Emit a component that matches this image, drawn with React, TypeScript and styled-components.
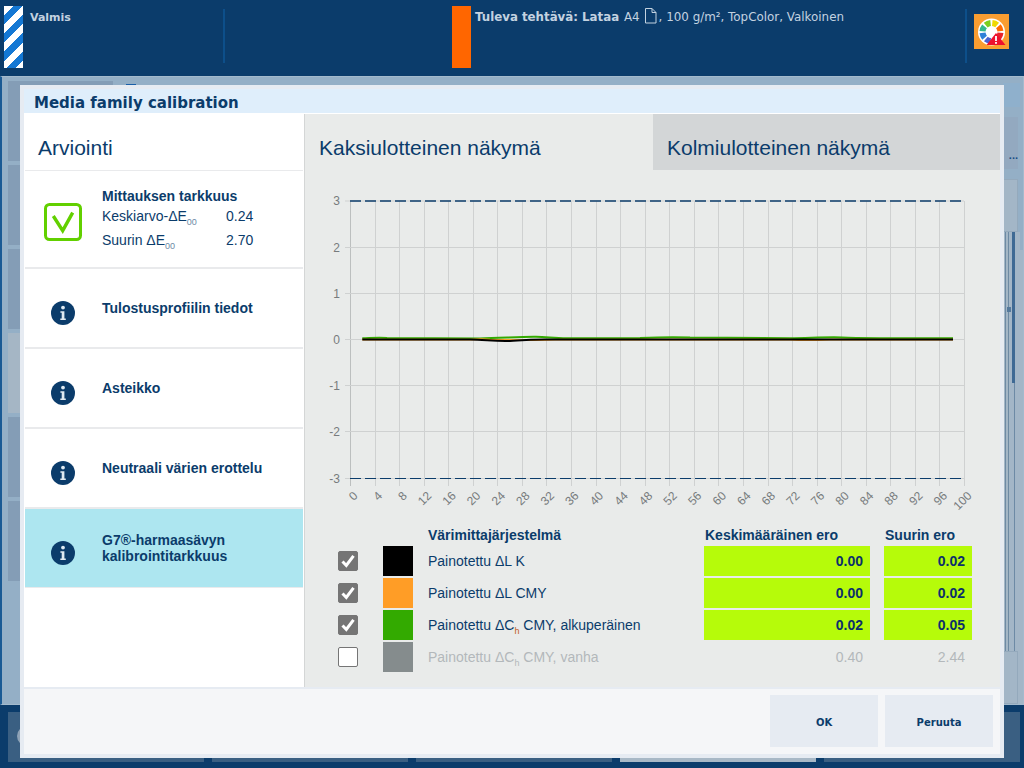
import React from "react";
import styled, { createGlobalStyle } from "styled-components";

const Global = createGlobalStyle`
  html, body { margin: 0; padding: 0; background: #0b3c6b; }
  * { box-sizing: border-box; }
`;

const NAVY = "#0b3c6b";
const SANS = `"Liberation Sans", Arial, sans-serif`;
const WIDE = `"DejaVu Sans", Verdana, sans-serif`;

const Page = styled.div`
  position: relative;
  width: 1024px;
  height: 768px;
  overflow: hidden;
  display: flex;
  flex-direction: column;
  background: ${NAVY};
  font-family: ${SANS};
`;

/* ---------- top status bar ---------- */
const Header = styled.header`
  height: 76px;
  flex: none;
  display: flex;
  align-items: flex-start;
  color: #c3d2e0;
  font-family: ${WIDE};
  font-size: 11.9px;
`;
const StripeFlag = styled.div`
  width: 19px;
  height: 62px;
  margin: 6px 0 0 4px;
  flex: none;
  background: repeating-linear-gradient(135deg, #ffffff 0 6.5px, #1478d4 6.5px 13px);
`;
const OrangeFlag = styled.div`
  width: 19px;
  height: 62px;
  margin: 6px 0 0 227px;
  flex: none;
  background: #ff6600;
`;
const Divider = styled.div`
  width: 2px;
  height: 54px;
  margin-top: 9px;
  flex: none;
  background: #0d4f8a;
`;
const ReadyText = styled.div`
  width: 193px;
  margin: 11px 0 0 7px;
  flex: none;
  font-weight: 700;
  font-size: 11px;
`;
const JobText = styled.div`
  width: 490px;
  flex: none;
  margin: 8px 0 0 4px;
  display: flex;
  align-items: center;
  white-space: pre;
  height: 18px;
  b { font-weight: 700; font-size: 11.8px; margin-right: 1px; }
`;
const PaperIcon = styled.svg`
  width: 13px;
  height: 16px;
  margin: -3px 2px 0 4px;
  flex: none;
`;
const StatusButton = styled.div`
  width: 35px;
  height: 35px;
  margin: 14px 0 0 7px;
  flex: none;
  background: #f99d31;
  svg { display: block; }
`;

/* ---------- dimmed page behind the dialog ---------- */
const Backdrop = styled.main`
  height: 629px;
  flex: none;
  display: flex;
  background: #94afc6;
  border: 1px solid #a3bacd;
  border-left: 2px solid #1a5a94;
  padding: 4px 0 0 6px;
`;
const TileColumn = styled.div`
  width: 105px;
  display: flex;
  flex-direction: column;
  gap: 4px;
`;
const Tile = styled.div<{ $light?: boolean }>`
  height: 80px;
  background: ${(p) => (p.$light ? "#a5b6c5" : "#849db6")};
`;
const TinyMark = styled.div`
  width: 10px;
  height: 2px;
  margin: 3px 0 0 13px;
  background: #1a5fa8;
`;
const SideRail = styled.div`
  width: 20px;
  margin: -1px 0 0 auto;
  display: flex;
  flex-direction: column;
  background: linear-gradient(#94afc6 170px, #a3b6c7 170px);
`;
const RailTop = styled.div`
  height: 24px;
  margin: 3px 3px 0 0;
  background: #8fb0cc;
`;
const RailDotsBox = styled.div`
  height: 52px;
  margin: 10px 5px 0 0;
  background: #93a9c0;
  color: #1a4f86;
  font-size: 11px;
  font-weight: 700;
  line-height: 14px;
  padding-top: 31px;
  text-align: right;
  overflow: hidden;
`;
const RailBox = styled.div<{ $m: number }>`
  height: 53px;
  margin: ${(p) => p.$m}px 5px 0 0;
  border: 1px solid #94a9bc;
  background: #a3b6c7;
  flex: none;
`;
const RailTrack = styled.div`
  position: relative;
  height: 419px;
  margin-right: 3px;
  background: linear-gradient(90deg, #a3b6c7 2px, #6d8aa5 2px 3px, #a3b6c7 3px 5px, #6d8aa5 5px 6px, #a3b6c7 6px 11px, #6d8aa5 11px 12px, #a3b6c7 12px);
`;
const RailThumb = styled.div`
  position: absolute;
  left: 9px;
  top: 0;
  width: 3px;
  height: 151px;
  background: #3f6a94;
`;
const RailMarker = styled.div`
  position: absolute;
  left: 4px;
  top: 75px;
  width: 4px;
  height: 5px;
  background: #557a9d;
`;

const BottomBar = styled.footer`
  flex: 1;
  display: flex;
  gap: 8px;
  padding: 7px 4px 6px 8px;
`;
const BottomTile = styled.div<{ $light?: boolean }>`
  flex: 1;
  padding: 14px 0 0 9px;
  background: ${(p) => (p.$light ? "#a8b8c6" : "#3a5f82")};
`;
const BottomDisc = styled.div`
  width: 20px;
  height: 20px;
  border-radius: 50%;
  background: #8fa3b7;
`;

/* ---------- dialog ---------- */
const Dialog = styled.section`
  position: absolute;
  left: 20px;
  top: 85px;
  width: 984px;
  height: 673px;
  border: 4px solid #e6ebf2;
  display: flex;
  flex-direction: column;
  background: #ffffff;
`;
const DialogTitle = styled.h1`
  margin: 0;
  height: 24px;
  flex: none;
  padding: 4px 0 0 10px;
  background: #dfeefb;
  color: ${NAVY};
  font-family: ${WIDE};
  font-size: 15px;
  line-height: 20px;
  font-weight: 700;
`;
const DialogBody = styled.div`
  flex: 1;
  min-height: 0;
  margin-top: 1px;
  display: flex;
`;

const LeftPanel = styled.aside`
  width: 281px;
  flex: none;
  border-right: 1px solid #d4d6d6;
  background: #ffffff;
  display: flex;
  flex-direction: column;
`;
const PanelTitle = styled.div`
  height: 56px;
  flex: none;
  padding: 22px 0 0 14px;
  color: ${NAVY};
  font-size: 21px;
  line-height: 24px;
`;
const List = styled.div`
  margin-left: 1px;
  width: 278px;
  display: flex;
  flex-direction: column;
`;
const ListItem = styled.div<{ $h: number; $pad: number; $first?: boolean; $selected?: boolean }>`
  height: ${(p) => p.$h}px;
  padding-top: ${(p) => p.$pad}px;
  border-top: ${(p) => (p.$first ? "1px" : "2px")} solid #e9eaec;
  border-bottom: ${(p) => (p.$selected ? "1px solid #e9eaec" : "0")};
  background: ${(p) => (p.$selected ? "#ade6f0" : "#ffffff")};
  display: flex;
  align-items: center;
  color: ${NAVY};
`;
const IconSlot = styled.div`
  width: 76px;
  margin-right: 1px;
  flex: none;
  display: flex;
  justify-content: center;
  svg { display: block; }
`;
const ItemLabel = styled.div`
  font-size: 14px;
  line-height: 16px;
  font-weight: 700;
  margin-bottom: 10px;
`;
const Measure = styled.div`
  display: grid;
  grid-template-columns: 124px auto;
  font-size: 14px;
  margin-bottom: 5px;
`;
const MeasureHead = styled.div`
  grid-column: 1 / 3;
  font-weight: 700;
  line-height: 20px;
`;
const MeasureCell = styled.div<{ $tall?: boolean }>`
  line-height: ${(p) => (p.$tall ? 28 : 20)}px;
  sub {
    font-size: 9px;
    line-height: 0;
    color: #6d8aa5;
  }
`;

const RightPanel = styled.div`
  flex: 1;
  min-width: 0;
  background: #e9ebea;
  display: flex;
  flex-direction: column;
`;
const Tabs = styled.div`
  height: 56px;
  flex: none;
  display: flex;
`;
const Tab = styled.div<{ $active?: boolean }>`
  width: ${(p) => (p.$active ? 348 : 347)}px;
  padding: 22px 0 0 14px;
  color: ${NAVY};
  font-size: 21px;
  line-height: 24px;
  background: ${(p) => (p.$active ? "#e9ebea" : "#d3d6d7")};
`;
const ChartSvg = styled.svg`
  display: block;
  flex: none;
  width: 695px;
  height: 357px;
  text {
    font-family: ${SANS};
    font-size: 12px;
    fill: #777b7d;
  }
`;

const Legend = styled.div`
  padding-left: 33px;
  display: grid;
  grid-template-columns: 45px 45px 276px 166px 14px 88px;
  grid-auto-rows: 30px;
  row-gap: 2px;
  grid-template-rows: 17px;
  color: ${NAVY};
  font-size: 14px;
`;
const HeadCell = styled.div<{ $col: number; $inset?: number }>`
  grid-column: ${(p) => p.$col};
  padding-left: ${(p) => p.$inset ?? 0}px;
  font-weight: 700;
  line-height: 17px;
  white-space: nowrap;
`;
const CheckCell = styled.div`
  grid-column: 1;
  display: flex;
  align-items: center;
`;
const CheckBox = styled.div<{ $on: boolean }>`
  width: 20px;
  height: 20px;
  border-radius: 2px;
  background: ${(p) => (p.$on ? "#757575" : "#ffffff")};
  border: 1px solid #757575;
  display: flex;
  align-items: center;
  justify-content: center;
`;
const Swatch = styled.div<{ $color: string }>`
  grid-column: 2;
  width: 30px;
  background: ${(p) => p.$color};
`;
const NameCell = styled.div<{ $off?: boolean }>`
  grid-column: 3;
  line-height: 30px;
  color: ${(p) => (p.$off ? "#b3b8bb" : NAVY)};
  sub {
    font-size: 9px;
    line-height: 0;
    color: ${(p) => (p.$off ? "#b3b8bb" : "#c25a1e")};
  }
`;
const ValueCell = styled.div<{ $col: number; $off?: boolean }>`
  grid-column: ${(p) => p.$col};
  text-align: right;
  padding-right: 7px;
  line-height: 30px;
  font-weight: ${(p) => (p.$off ? 400 : 700)};
  color: ${(p) => (p.$off ? "#b3b8bb" : "#0b2f6b")};
  background: ${(p) => (p.$off ? "transparent" : "#b6fb0a")};
`;

const DialogFooter = styled.div`
  height: 67px;
  flex: none;
  border-top: 2px solid #e6ebf2;
  background: #f5f6f8;
  display: flex;
  justify-content: flex-end;
  gap: 7px;
  padding: 6px 7px 0 0;
`;
const FooterButton = styled.button`
  width: 108px;
  height: 52px;
  border: 0;
  padding: 2px 0 0;
  background: #e6ebf2;
  color: ${NAVY};
  font-family: ${WIDE};
  font-size: 10px;
  font-weight: 700;
`;

/* ---------- drawings ---------- */
const InfoIcon = () => (
  <svg width="24" height="24" viewBox="0 0 24 24">
    <circle cx="12" cy="12" r="12" fill={NAVY} />
    <circle cx="12" cy="6.6" r="1.9" fill="#dfeaf2" />
    <path d="M9.4 10.2h4v7.2h1.4v1.6H9.3v-1.6h1.4v-5.6H9.4z" fill="#dfeaf2" />
  </svg>
);
const OkIcon = () => (
  <svg width="38" height="38" viewBox="0 0 38 38">
    <rect x="1.5" y="1.5" width="35" height="35" rx="4" fill="none" stroke="#62d000" strokeWidth="3" />
    <path d="M9.3 13 L18.7 27.7 L28.7 9.7" fill="none" stroke="#62d000" strokeWidth="3.4" />
  </svg>
);
const Tick = () => (
  <svg width="16" height="16" viewBox="0 0 16 16">
    <path d="M2.5 8.5 L6.3 12.5 L13.5 2.8" fill="none" stroke="#ffffff" strokeWidth="3" />
  </svg>
);
const wheel: [string, number][] = [
  ["#f0d800", 22], ["#ff6a00", 67], ["#e9232b", 112], ["#7a3fb0", 157],
  ["#4a62d0", 202], ["#2f80d8", 247], ["#34b88c", 292], ["#7ccf1e", 337],
];
const StatusIcon = () => (
  <svg width="35" height="35" viewBox="0 0 35 35">
    <circle cx="17.5" cy="18" r="13.5" fill="#ffffff" />
    {wheel.map(([c, a]) => (
      <path key={a} d="M14 6.5 A12 12 0 0 1 21 6.5 L19.25 12.3 A6 6 0 0 0 15.75 12.3 Z" fill={c} transform={`rotate(${a} 17.5 18)`} />
    ))}
    <path d="M22 19 L31.5 31 L12.5 31 Z" fill="#ee0f2d" />
    <rect x="21.1" y="22" width="1.8" height="5" fill="#ffffff" />
    <rect x="21.1" y="28" width="1.8" height="1.8" fill="#ffffff" />
  </svg>
);

const xs = (v: number) => 350 + v * 6.14;
const gridX = (v: number) => Math.round(xs(v)) + 0.5;
const yTicks: [number, number][] = [[3, 201], [2, 247.5], [1, 293.5], [0, 339.5], [-1, 385.5], [-2, 431.5], [-3, 478.5]];
const xTicks = Array.from({ length: 26 }, (_, i) => i * 4);

const green = "M362.3 338.2 C375 337.8 380 337.4 387 338 L480 338.4 C500 338.2 520 336.6 536 336.8 C548 337 556 338.2 575 338.3 L640 338 C660 337.2 675 336.9 690 337.6 L790 338.2 C810 338 825 336.9 842 337.4 C855 338 870 338.3 953 338.3";
const orange = "M362.3 339.6 L470 339.6 C478 339 484 339 490 339.6 L520 340 C530 340.6 540 340.2 560 339.6 L790 339.6 C805 340.8 815 340.4 830 339.6 L953 339.6";
const black = "M362.3 339.4 L470 339.4 C485 339.6 495 341.6 510 341 C520 340.4 525 339.4 545 339.4 L953 339.4";

const Chart = () => (
  <ChartSvg viewBox="305 170 695 357">
    {xTicks.map((t) => (
      <line key={t} x1={gridX(t)} x2={gridX(t)} y1={201} y2={486} stroke={t === 0 ? "#bcbfbf" : "#cfd1d1"} strokeWidth="1" />
    ))}
    {yTicks.map(([t, y]) => (
      <line key={t} x1={345} x2={964} y1={y} y2={y} stroke="#cfd1d1" strokeWidth="1" />
    ))}
    <line x1={350} x2={964} y1={201} y2={201} stroke={NAVY} strokeWidth="1.4" strokeDasharray="11 4" />
    <line x1={350} x2={964} y1={478.5} y2={478.5} stroke={NAVY} strokeWidth="1" strokeDasharray="11 4" />
    <path d={green} fill="none" stroke="#33aa00" strokeWidth="2" />
    <path d={orange} fill="none" stroke="#ff9d26" strokeWidth="1.6" />
    <path d={black} fill="none" stroke="#000000" strokeWidth="2" />
    {yTicks.map(([t, y]) => (
      <text key={t} x={340} y={y + 4} textAnchor="end">{t}</text>
    ))}
    {xTicks.map((t) => (
      <text key={t} textAnchor="end" transform={`translate(${xs(t) + 8.5} 496.5) rotate(-45)`}>{t}</text>
    ))}
  </ChartSvg>
);

const rows = [
  { color: "#000000", on: true, name: <>Painotettu ΔL K</>, a: "0.00", b: "0.02" },
  { color: "#ff9d26", on: true, name: <>Painotettu ΔL CMY</>, a: "0.00", b: "0.02" },
  { color: "#33aa00", on: true, name: <>Painotettu ΔC<sub>h</sub> CMY, alkuperäinen</>, a: "0.02", b: "0.05" },
  { color: "#858c8d", on: false, name: <>Painotettu ΔC<sub>h</sub> CMY, vanha</>, a: "0.40", b: "2.44" },
];

export default function App() {
  return (
    <Page>
      <Global />
      <Header>
        <StripeFlag />
        <ReadyText>Valmis</ReadyText>
        <Divider />
        <OrangeFlag />
        <JobText>
          <b>Tuleva tehtävä: Lataa</b> A4
          <PaperIcon viewBox="0 0 13 16">
            <path d="M1.5 .5H8L12 4.5V15H1.5ZM8 .5V4.5H12" fill="none" stroke="#c3d2e0" />
          </PaperIcon>
          , 100 g/m², TopColor, Valkoinen
        </JobText>
        <Divider />
        <StatusButton><StatusIcon /></StatusButton>
      </Header>

      <Backdrop>
        <TileColumn>
          <Tile /><Tile /><Tile /><Tile $light /><Tile /><Tile />
        </TileColumn>
        <TinyMark />
        <SideRail>
          <RailTop />
          <RailDotsBox>...</RailDotsBox>
          <RailBox $m={10} />
          <RailTrack><RailThumb /><RailMarker /></RailTrack>
          <RailBox $m={0} />
        </SideRail>
      </Backdrop>

      <BottomBar>
        <BottomTile><BottomDisc /></BottomTile>
        <BottomTile /><BottomTile /><BottomTile $light /><BottomTile />
      </BottomBar>

      <Dialog>
        <DialogTitle>Media family calibration</DialogTitle>
        <DialogBody>
          <LeftPanel>
            <PanelTitle>Arviointi</PanelTitle>
            <List>
              <ListItem $h={97} $pad={6} $first>
                <IconSlot><OkIcon /></IconSlot>
                <Measure>
                  <MeasureHead>Mittauksen tarkkuus</MeasureHead>
                  <MeasureCell>Keskiarvo-ΔE<sub>00</sub></MeasureCell>
                  <MeasureCell>0.24</MeasureCell>
                  <MeasureCell $tall>Suurin ΔE<sub>00</sub></MeasureCell>
                  <MeasureCell $tall>2.70</MeasureCell>
                </Measure>
              </ListItem>
              <ListItem $h={80} $pad={10}><IconSlot><InfoIcon /></IconSlot><ItemLabel>Tulostusprofiilin tiedot</ItemLabel></ListItem>
              <ListItem $h={80} $pad={10}><IconSlot><InfoIcon /></IconSlot><ItemLabel>Asteikko</ItemLabel></ListItem>
              <ListItem $h={80} $pad={10}><IconSlot><InfoIcon /></IconSlot><ItemLabel>Neutraali värien erottelu</ItemLabel></ListItem>
              <ListItem $h={81} $pad={10} $selected><IconSlot><InfoIcon /></IconSlot><ItemLabel>G7®-harmaasävyn<br />kalibrointitarkkuus</ItemLabel></ListItem>
            </List>
          </LeftPanel>
          <RightPanel>
            <Tabs>
              <Tab $active>Kaksiulotteinen näkymä</Tab>
              <Tab>Kolmiulotteinen näkymä</Tab>
            </Tabs>
            <Chart />
            <Legend>
              <HeadCell $col={3}>Värimittajärjestelmä</HeadCell>
              <HeadCell $col={4} $inset={1}>Keskimääräinen ero</HeadCell>
              <HeadCell $col={6} $inset={1}>Suurin ero</HeadCell>
              {rows.map((r) => (
                <React.Fragment key={r.color}>
                  <CheckCell><CheckBox $on={r.on}>{r.on && <Tick />}</CheckBox></CheckCell>
                  <Swatch $color={r.color} />
                  <NameCell $off={!r.on}>{r.name}</NameCell>
                  <ValueCell $col={4} $off={!r.on}>{r.a}</ValueCell>
                  <ValueCell $col={6} $off={!r.on}>{r.b}</ValueCell>
                </React.Fragment>
              ))}
            </Legend>
          </RightPanel>
        </DialogBody>
        <DialogFooter>
          <FooterButton>OK</FooterButton>
          <FooterButton>Peruuta</FooterButton>
        </DialogFooter>
      </Dialog>
    </Page>
  );
}
